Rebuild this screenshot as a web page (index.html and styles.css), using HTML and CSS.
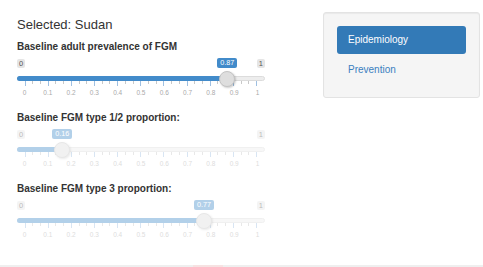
FILE: index.html
```html
<!DOCTYPE html>
<html>
<head>
<meta charset="utf-8">
<link rel="stylesheet" href="styles.css">
</head>
<body>
<div class="page">
  <div class="left">
    <h4 class="title">Selected: Sudan</h4>

    <div class="group">
      <label class="lbl">Baseline adult prevalence of FGM</label>
      <div class="irs" style="--v:0.87">
        <div class="irs-top">
          <span class="irs-min">0</span>
          <span class="irs-max">1</span>
          <span class="irs-single">0.87</span>
        </div>
        <div class="irs-line">
          <div class="irs-bar"></div>
          <div class="irs-handle"></div>
        </div>
        <div class="irs-grid">
          <span class="pol big"></span><span class="pol"></span><span class="pol"></span>
          <span class="pol big"></span><span class="pol"></span><span class="pol"></span>
          <span class="pol big"></span><span class="pol"></span><span class="pol"></span>
          <span class="pol big"></span><span class="pol"></span><span class="pol"></span>
          <span class="pol big"></span><span class="pol"></span><span class="pol"></span>
          <span class="pol big"></span><span class="pol"></span><span class="pol"></span>
          <span class="pol big"></span><span class="pol"></span><span class="pol"></span>
          <span class="pol big"></span><span class="pol"></span><span class="pol"></span>
          <span class="pol big"></span><span class="pol"></span><span class="pol"></span>
          <span class="pol big"></span><span class="pol"></span><span class="pol"></span>
          <span class="pol big"></span>
        </div>
        <div class="irs-grid-text">
          <span>0</span><span>0.1</span><span>0.2</span><span>0.3</span><span>0.4</span><span>0.5</span><span>0.6</span><span>0.7</span><span>0.8</span><span>0.9</span><span>1</span>
        </div>
      </div>
    </div>

    <div class="group">
      <label class="lbl">Baseline FGM type 1/2 proportion:</label>
      <div class="irs disabled" style="--v:0.16">
        <div class="irs-top">
          <span class="irs-min">0</span>
          <span class="irs-max">1</span>
          <span class="irs-single">0.16</span>
        </div>
        <div class="irs-line">
          <div class="irs-bar"></div>
          <div class="irs-handle"></div>
        </div>
        <div class="irs-grid">
          <span class="pol big"></span><span class="pol"></span><span class="pol"></span>
          <span class="pol big"></span><span class="pol"></span><span class="pol"></span>
          <span class="pol big"></span><span class="pol"></span><span class="pol"></span>
          <span class="pol big"></span><span class="pol"></span><span class="pol"></span>
          <span class="pol big"></span><span class="pol"></span><span class="pol"></span>
          <span class="pol big"></span><span class="pol"></span><span class="pol"></span>
          <span class="pol big"></span><span class="pol"></span><span class="pol"></span>
          <span class="pol big"></span><span class="pol"></span><span class="pol"></span>
          <span class="pol big"></span><span class="pol"></span><span class="pol"></span>
          <span class="pol big"></span><span class="pol"></span><span class="pol"></span>
          <span class="pol big"></span>
        </div>
        <div class="irs-grid-text">
          <span>0</span><span>0.1</span><span>0.2</span><span>0.3</span><span>0.4</span><span>0.5</span><span>0.6</span><span>0.7</span><span>0.8</span><span>0.9</span><span>1</span>
        </div>
      </div>
    </div>

    <div class="group">
      <label class="lbl">Baseline FGM type 3 proportion:</label>
      <div class="irs disabled" style="--v:0.77">
        <div class="irs-top">
          <span class="irs-min">0</span>
          <span class="irs-max">1</span>
          <span class="irs-single">0.77</span>
        </div>
        <div class="irs-line">
          <div class="irs-bar"></div>
          <div class="irs-handle"></div>
        </div>
        <div class="irs-grid">
          <span class="pol big"></span><span class="pol"></span><span class="pol"></span>
          <span class="pol big"></span><span class="pol"></span><span class="pol"></span>
          <span class="pol big"></span><span class="pol"></span><span class="pol"></span>
          <span class="pol big"></span><span class="pol"></span><span class="pol"></span>
          <span class="pol big"></span><span class="pol"></span><span class="pol"></span>
          <span class="pol big"></span><span class="pol"></span><span class="pol"></span>
          <span class="pol big"></span><span class="pol"></span><span class="pol"></span>
          <span class="pol big"></span><span class="pol"></span><span class="pol"></span>
          <span class="pol big"></span><span class="pol"></span><span class="pol"></span>
          <span class="pol big"></span><span class="pol"></span><span class="pol"></span>
          <span class="pol big"></span>
        </div>
        <div class="irs-grid-text">
          <span>0</span><span>0.1</span><span>0.2</span><span>0.3</span><span>0.4</span><span>0.5</span><span>0.6</span><span>0.7</span><span>0.8</span><span>0.9</span><span>1</span>
        </div>
      </div>
    </div>
  </div>

  <div class="well">
    <ul class="pills">
      <li class="active"><a>Epidemiology</a></li>
      <li><a>Prevention</a></li>
    </ul>
  </div>
</div>
<div class="bottom"><span class="bottom-mark"></span></div>
</body>
</html>
```

FILE: styles.css
```css
* { box-sizing: border-box; }

html, body {
  margin: 0;
  padding: 0;
  background: #fff;
  font-family: "Liberation Sans", Arial, sans-serif;
  color: #333;
}

.page {
  display: flex;
  align-items: flex-start;
  height: 265px;
  padding: 12px 0 0 17px;
}

.left {
  width: 248px;
  padding-top: 5px;
}

.title {
  margin: 0;
  font-size: 13px;
  line-height: 16px;
  font-weight: normal;
  color: #333;
}

.group {
  height: 71px;
}

.group:first-of-type {
  margin-top: 8px;
}

.lbl {
  display: block;
  font-size: 10px;
  line-height: 12px;
  font-weight: bold;
  color: #333;
}

.irs {
  position: relative;
  --ps: 8px;
  --pw: 232.5px;
}

.irs.disabled {
  opacity: 0.4;
}

.irs-top {
  position: relative;
  display: flex;
  justify-content: space-between;
  align-items: center;
  height: 10px;
  margin-top: 5px;
}

.irs-min, .irs-max {
  font-size: 7.5px;
  line-height: 9px;
  padding: 0 2px;
  background: rgba(0, 0, 0, 0.1);
  color: #555;
  border-radius: 2px;
}

.irs-single {
  position: absolute;
  top: 0;
  left: calc(var(--ps) + var(--v) * var(--pw));
  transform: translateX(-50%);
  font-size: 7.2px;
  line-height: 10px;
  padding: 0 3px;
  background: #428bca;
  color: #fff;
  border-radius: 2px;
}

.irs-line {
  position: relative;
  height: 5px;
  margin-top: 8px;
  background: #ededed;
  border: 1px solid #dcdcdc;
  border-radius: 3px;
}

.irs-bar {
  position: absolute;
  left: -1px;
  top: -1px;
  bottom: -1px;
  width: calc(var(--ps) + var(--v) * var(--pw));
  background: #428bca;
  border-radius: 3px 0 0 3px;
}

.irs-handle {
  position: absolute;
  top: -6.5px;
  left: calc(var(--ps) + var(--v) * var(--pw) - 9px);
  width: 16px;
  height: 16px;
  border-radius: 50%;
  background: #dedede;
  border: 1px solid #c4c4c4;
  box-shadow: 1px 1px 2px rgba(0, 0, 0, 0.2);
}

.irs-grid {
  display: flex;
  justify-content: space-between;
  align-items: flex-start;
  height: 5px;
  margin: 0 7.5px 0 7.5px;
}

.pol {
  width: 1px;
  height: 3px;
  background: #c8c8c8;
}

.pol.big {
  height: 5px;
  background: #9fc0e2;
}

.irs-grid-text {
  display: flex;
  justify-content: space-between;
  margin: 2px -2.5px 0 -2.5px;
  font-size: 6.5px;
  line-height: 9px;
  color: #aaa;
}

.irs-grid-text span {
  width: 20px;
  text-align: center;
}

.well {
  margin-left: 58px;
  width: 157px;
  padding: 13px 13px 13px 13px;
  background: #f5f5f5;
  border: 1px solid #e3e3e3;
  border-radius: 3px;
  box-shadow: inset 0 1px 1px rgba(0, 0, 0, 0.05);
}

.pills {
  list-style: none;
  margin: 0;
  padding: 0;
  display: flex;
  flex-direction: column;
  gap: 2px;
}

.pills a {
  display: block;
  height: 28px;
  line-height: 28px;
  padding: 0 11px;
  font-size: 10px;
  color: #3a80c0;
  border-radius: 3px;
}

.pills .active a {
  background: #337ab7;
  color: #fff;
}

.bottom {
  height: 2px;
  background: #efefef;
  display: flex;
}

.bottom-mark {
  display: block;
  margin-left: 193px;
  width: 30px;
  height: 2px;
  background: #f6e2e2;
}
```
